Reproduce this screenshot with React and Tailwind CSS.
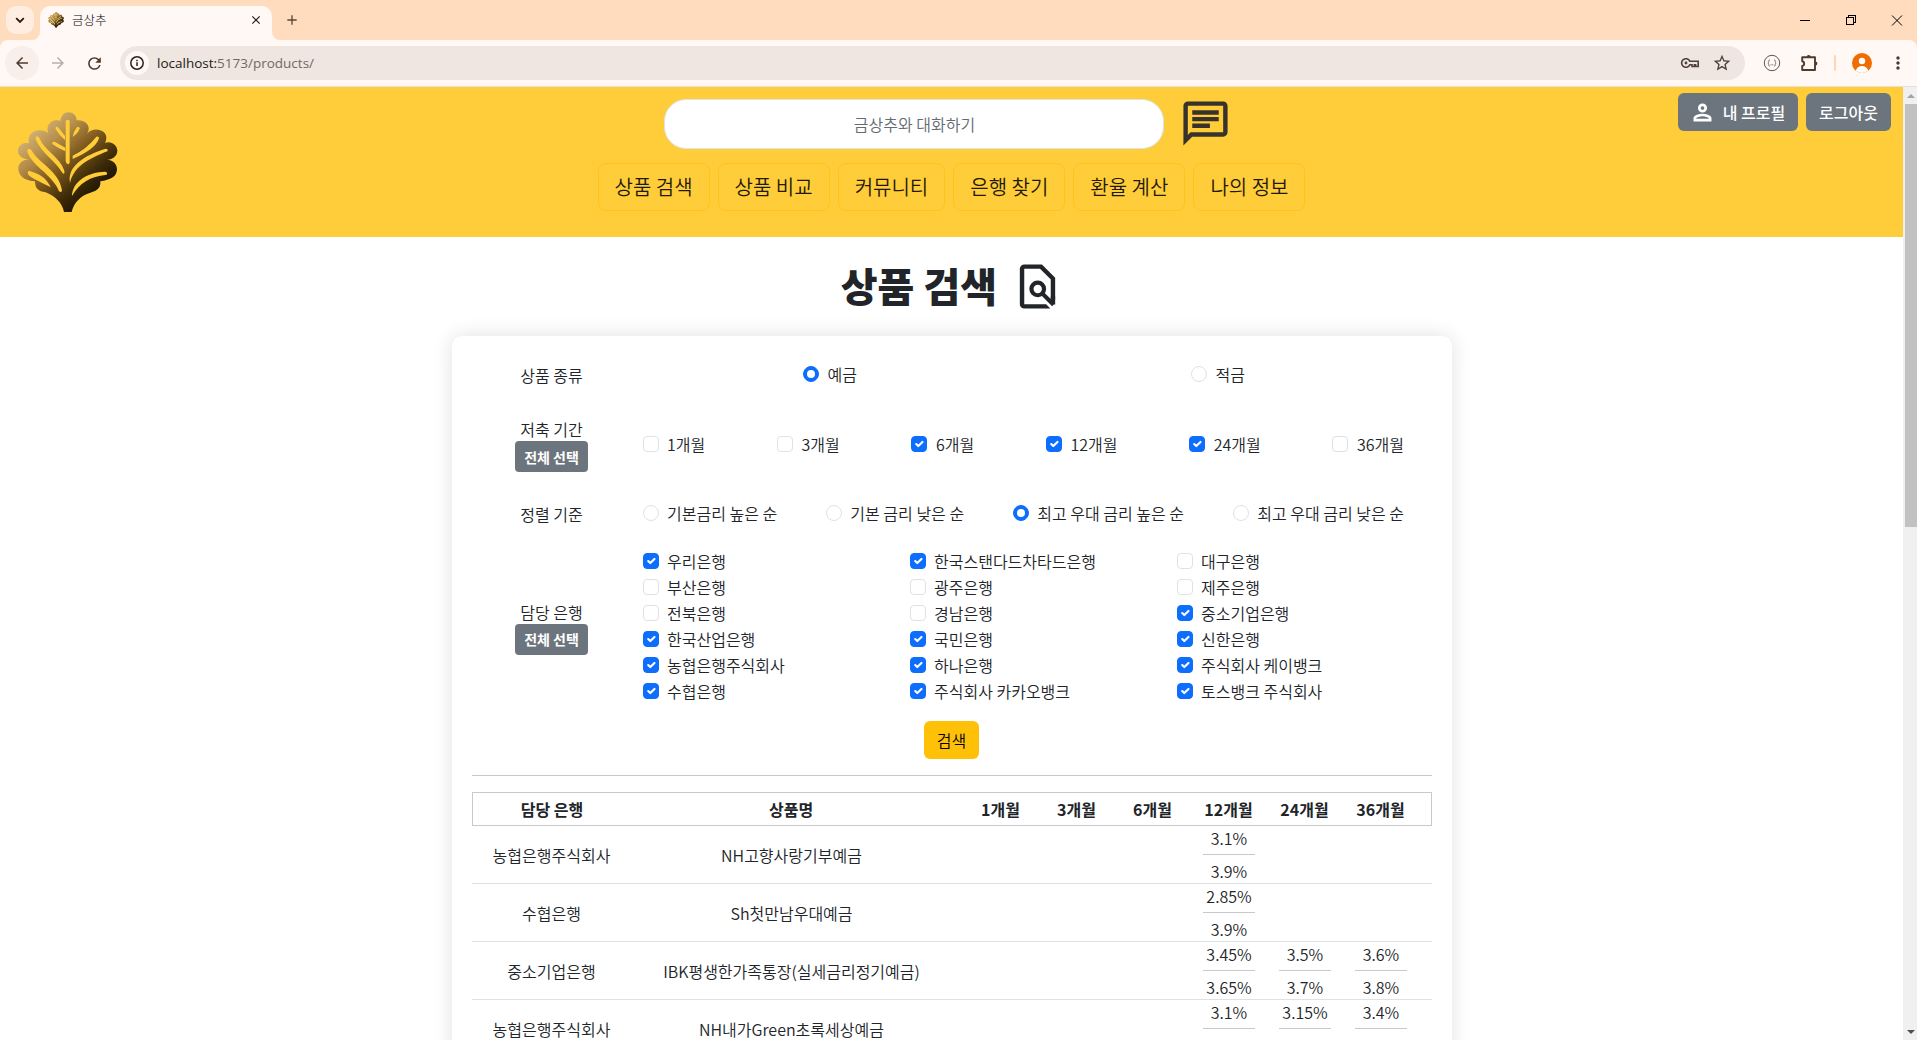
import React from "react";
import {
  MdOutlineChat,
  MdArrowBack,
  MdArrowForward,
  MdRefresh,
  MdStarBorder,
  MdMoreVert,
  MdAdd,
  MdClose,
} from "react-icons/md";

function Leaf({ id, vein, className }) {
  return (
    <svg viewBox="52 50 303 303" className={className} fill="none">
      <defs>
        <linearGradient id={id} gradientUnits="userSpaceOnUse" x1="95" y1="85" x2="285" y2="300">
          <stop offset="0" stopColor="#dcbc80" />
          <stop offset="0.3" stopColor="#b38c48" />
          <stop offset="0.55" stopColor="#7d581c" />
          <stop offset="0.8" stopColor="#3f2c08" />
          <stop offset="1" stopColor="#1c1402" />
        </linearGradient>
      </defs>
      <path
        fill={`url(#${id})`}
        d="M193 350C188 322 165 302 138 291C116 288 106 280 106 258C84 257 58 248 56 222C55 202 72 191 91 193C70 192 53 182 55 164C58 145 74 140 88 144C82 122 98 104 120 105C132 105 140 108 146 114C138 94 150 74 172 75C178 75 180 76 182 77C184 60 194 51 206 51C220 51 230 60 231 75C250 72 268 84 267 100C267 106 264 112 262 115C276 98 300 100 312 110C322 119 322 132 316 142C336 136 352 148 353 166C353 184 336 194 314 194C336 190 352 204 352 222C352 244 332 254 302 258C304 276 294 287 272 292C244 300 222 322 216 350Z"
      />
      <g fill={vein}>
        <path d="M198 77Q204 70 210 77V200Q210 208 204 206Q198 203 198 196Z" />
        <path d="M168 95Q174 93 178 99L196 122V134Q180 122 168 102Z" />
        <path d="M158 141Q163 137 168 141L197 157V168Q174 158 158 146Z" />
        <path d="M232 95Q239 92 240 99Q236 113 219 125Q222 108 232 95Z" />
        <path d="M290 124Q298 121 298 129Q288 162 219 191V181Q262 160 290 124Z" />
        <path d="M318 160Q327 161 323 168C270 190 226 208 211 262C202 214 252 180 318 160Z" />
        <path d="M316 229Q325 230 321 238C270 244 240 262 217 302C218 256 268 230 316 229Z" />
        <path d="M108 125Q114 120 119 128C136 168 180 184 194 226Q196 240 188 232C168 198 124 172 108 132Z" />
        <path d="M83 163Q89 157 95 164C118 206 176 224 187 284Q187 294 178 288C160 240 100 214 83 171Z" />
        <path d="M84 230Q88 225 96 229C122 236 142 250 153 276C132 264 94 250 85 237Z" />
      </g>
    </svg>
  );
}

function FindInPage({ className }) {
  return (
    <svg viewBox="0 0 24 24" className={className} fill="none" stroke="currentColor">
      <path d="M19 18V8.400L13.600 3H6A1 1 0 0 0 5 4V20a1 1 0 0 0 1 1H15.800" strokeWidth="2" />
      <path d="M15.600 20h.300l1.900 2h-2.200zM18 16.500h2v3.900l-2-1.800z" fill="currentColor" stroke="none" />
      <circle cx="12.100" cy="13.100" r="2.850" strokeWidth="1.900" />
      <path d="M14 15l5.300 5.300" strokeWidth="1.900" />
    </svg>
  );
}

function Person({ className }) {
  return (
    <svg viewBox="0 0 24 24" className={className} fill="none" stroke="currentColor" strokeWidth="2.400">
      <circle cx="12" cy="8" r="2.850" />
      <path d="M5.200 18.800V17c0-1.500 3.800-2.800 6.800-2.800s6.800 1.300 6.800 2.800v1.800z" />
    </svg>
  );
}

function BrowserChrome() {
  return (
    <div className="shrink-0 bg-[#ffdcbe] font-['Open_Sans','Noto_Sans_CJK_KR',sans-serif]">
      <div className="flex h-10 items-start">
        <div className="mt-1.5 ml-1.5 flex size-7 items-center justify-center rounded-[10px] bg-[#ffede1]">
          <svg viewBox="0 0 16 16" className="size-4" fill="none" stroke="#231a13" strokeWidth="1.800">
            <path d="M4.200 6.200L8 10l3.800-3.800" />
          </svg>
        </div>
        <div className="relative mt-1.5 ml-1.5 flex h-[34px] w-[232px] items-center rounded-t-[10px] bg-[#fff8f5] pr-[9px] pb-1.5 pl-2">
          <svg viewBox="0 0 10 10" className="absolute bottom-0 -left-2 size-2" fill="#fff8f5">
            <path d="M10 0v10H0A10 10 0 0 0 10 0Z" />
          </svg>
          <svg viewBox="0 0 10 10" className="absolute -right-2 bottom-0 size-2" fill="#fff8f5">
            <path d="M0 0v10h10A10 10 0 0 1 0 0Z" />
          </svg>
          <Leaf id="leaf-small" vein="#ecd489" className="size-4" />
          <span className="mt-0.5 ml-2 text-[12.5px] leading-4 font-light text-black">금상추</span>
          <MdClose className="ml-auto size-[14px] text-[#231a13]" />
        </div>
        <div className="mt-3 ml-3 flex size-4 items-center justify-center">
          <MdAdd className="size-4 shrink-0 text-[#5e4630]" />
        </div>
        <div className="-mr-[3px] ml-auto flex h-10 items-center">
          <svg viewBox="0 0 46 40" className="h-10 w-[46px]" shapeRendering="crispEdges">
            <path d="M18 20.500h10" stroke="#000" />
          </svg>
          <svg viewBox="0 0 46 40" className="h-10 w-[46px]" fill="none" stroke="#000" shapeRendering="crispEdges">
            <path d="M18.500 17.500h7v7h-7zM20.500 17.500v-2h7v7h-2" />
          </svg>
          <svg viewBox="0 0 46 40" className="h-10 w-[46px]" fill="none" stroke="#000">
            <path d="M18 15.500l10 10M28 15.500l-10 10" />
          </svg>
        </div>
      </div>
      <div className="flex h-[47px] items-center rounded-t-lg border-b border-[#eadfd8] bg-[#fff8f5]">
        <div className="ml-[5px] flex size-[34px] items-center justify-center rounded-full bg-[#f8eeea]">
          <MdArrowBack className="size-[18px] text-[#4f3b2c]" />
        </div>
        <div className="ml-0.5 flex size-[34px] items-center justify-center">
          <MdArrowForward className="size-[18px] text-[#b8aea8]" />
        </div>
        <div className="ml-0.5 flex size-[34px] items-center justify-center">
          <MdRefresh className="size-[19px] text-[#4f3b2c]" />
        </div>
        <div className="ml-[9px] flex h-[34px] w-[1625px] items-center rounded-full bg-[#efe6e2] pl-[5px]">
          <div className="flex size-6 items-center justify-center rounded-full bg-[#fff8f5]">
            <svg viewBox="0 0 16 16" className="size-4" fill="none" stroke="#2a211b" strokeWidth="1.500">
              <circle cx="8" cy="8" r="6.200" />
              <path d="M8 7.300v3.700M8 4.700v1.500" />
            </svg>
          </div>
          <span className="ml-2 text-[13.5px] leading-5 text-[#75675f]">
            <span className="text-[#231a13]">localhost:</span>5173/products/
          </span>
          <svg viewBox="0 0 20 12" className="ml-auto h-3 w-5" fill="none" stroke="#4f4038" strokeWidth="1.600">
            <path d="M9.800 4.200H18.200V9.500H15.600V7.800H14.400V9.500H12V7.800H9.800A4.300 4.300 0 1 1 9.800 4.200Z" />
            <circle cx="6" cy="6" r="1.400" fill="#4f4038" stroke="none" />
          </svg>
          <MdStarBorder className="mr-[13px] ml-[12px] size-5 text-[#4f4038]" />
        </div>
        <svg viewBox="0 0 18 18" className="ml-[18px] size-[18px]" fill="none" stroke="#5e5650">
          <circle cx="9" cy="9" r="7.700" />
          <path d="M7 5.800c-1.600 0-1.100 1.300-1.300 2.300L4.800 9l.9.900c.2 1-.3 2.300 1.300 2.300M11 5.800c1.600 0 1.100 1.300 1.300 2.300l.9.900-.9.900c-.2 1 .3 2.300-1.300 2.300" strokeWidth=".8" />
          <path d="M7.500 10.800h3" strokeWidth=".8" strokeDasharray="1 .4" />
        </svg>
        <svg viewBox="0 0 20 20" className="ml-[18px] size-5" fill="none" stroke="#4f3b2c" strokeWidth="1.900" strokeLinejoin="round">
          <path d="M3.200 4.300H16v12.700H3.200V13a2.400 2.400 0 0 0 0-4.700z" />
          <path d="M7.700 3.900a2 2 0 0 1 4 0zM16.400 8.500a2 2 0 0 1 0 4z" fill="#4f3b2c" stroke="none" />
        </svg>
        <div className="ml-[15px] h-4 w-0.5 rounded-full bg-[#ffd5b3]" />
        <svg viewBox="0 0 20 20" className="ml-4 size-5">
          <circle cx="10" cy="10" r="10" fill="#ef6c00" />
          <circle cx="10" cy="8" r="3.200" fill="#fff" />
          <path d="M3.800 17.800C4.500 14.500 7 13 10 13s5.500 1.500 6.200 4.800A10 10 0 0 1 3.800 17.800Z" fill="#fff" />
        </svg>
        <MdMoreVert className="ml-4 size-5 text-[#4f3b2c]" />
      </div>
    </div>
  );
}

function Option({ label, checked, radio }) {
  const shape = radio ? "rounded-full" : "rounded-[4px]";
  const fill = checked ? "border-[#0d6efd] bg-[#0d6efd]" : "border-[#dee2e6] bg-white";
  return (
    <label className="flex h-6 items-start gap-[8.5px]">
      <span className={`mt-1 flex size-4 items-center justify-center border ${shape} ${fill}`}>
        {checked && radio && <span className="size-2 rounded-full bg-white" />}
        {checked && !radio && (
          <svg viewBox="0 0 20 20" className="size-3.5 shrink-0" fill="none" stroke="#fff" strokeWidth="3" strokeLinecap="round" strokeLinejoin="round">
            <path d="m6 10 3 3 6-6" />
          </svg>
        )}
      </span>
      <span className="leading-6">{label}</span>
    </label>
  );
}

function Label({ children, all }) {
  return (
    <div className="flex w-40 shrink-0 flex-col items-center justify-center">
      <span className="leading-6">{children}</span>
      {all && (
        <button className="h-[31px] rounded-[4px] bg-[#6c757d] px-[9px] text-sm leading-5 font-bold text-white">전체 선택</button>
      )}
    </div>
  );
}

const NAV = ["상품 검색", "상품 비교", "커뮤니티", "은행 찾기", "환율 계산", "나의 정보"];

const PERIODS = [
  ["1개월", false],
  ["3개월", false],
  ["6개월", true],
  ["12개월", true],
  ["24개월", true],
  ["36개월", false],
];

const SORTS = [
  ["기본금리 높은 순", false],
  ["기본 금리 낮은 순", false],
  ["최고 우대 금리 높은 순", true],
  ["최고 우대 금리 낮은 순", false],
];

const BANKS = [
  ["우리은행", true],
  ["한국스탠다드차타드은행", true],
  ["대구은행", false],
  ["부산은행", false],
  ["광주은행", false],
  ["제주은행", false],
  ["전북은행", false],
  ["경남은행", false],
  ["중소기업은행", true],
  ["한국산업은행", true],
  ["국민은행", true],
  ["신한은행", true],
  ["농협은행주식회사", true],
  ["하나은행", true],
  ["주식회사 케이뱅크", true],
  ["수협은행", true],
  ["주식회사 카카오뱅크", true],
  ["토스뱅크 주식회사", true],
];

const ROWS = [
  { bank: "농협은행주식회사", name: "NH고향사랑기부예금", rates: [null, null, null, ["3.1%", "3.9%"], null, null] },
  { bank: "수협은행", name: "Sh첫만남우대예금", rates: [null, null, null, ["2.85%", "3.9%"], null, null] },
  {
    bank: "중소기업은행",
    name: "IBK평생한가족통장(실세금리정기예금)",
    rates: [null, null, null, ["3.45%", "3.65%"], ["3.5%", "3.7%"], ["3.6%", "3.8%"]],
  },
  {
    bank: "농협은행주식회사",
    name: "NH내가Green초록세상예금",
    rates: [null, null, null, ["3.1%"], ["3.15%"], ["3.4%"]],
  },
];

function Header() {
  return (
    <header className="grid h-[150px] grid-cols-[1fr_auto_1fr] bg-[#ffcd39]">
      <div className="pt-[25px] pl-[17px]">
        <Leaf id="leaf-large" vein="#ffcd39" className="size-[101px]" />
      </div>
      <div className="flex flex-col items-center pt-3">
        <div className="flex h-[52px] pl-0.5">
          <div className="flex h-[50px] w-[500px] items-center justify-center rounded-[22px] border border-[#dee2e6] bg-white text-[#646b71]">
            금상추와 대화하기
          </div>
          <MdOutlineChat className="-mt-0.5 mr-2 ml-[15px] size-[53px] text-[#38332a]" />
        </div>
        <nav className="mt-3 flex gap-2">
          {NAV.map((item) => (
            <button key={item} className="h-12 rounded-lg border border-[#ffc31a] px-4 text-xl leading-[30px] text-[#1f1a08]">
              {item}
            </button>
          ))}
        </nav>
      </div>
      <div className="flex items-start justify-end gap-2 pt-1.5 pr-3 font-medium text-white">
        <button className="flex h-[38px] items-center rounded-md bg-[#6c757d] pr-[13px] pl-[11px]">
          <Person className="mr-[7px] size-[27px]" />내 프로필
        </button>
        <button className="h-[38px] rounded-md bg-[#6c757d] px-[13px]">로그아웃</button>
      </div>
    </header>
  );
}

function SearchForm() {
  return (
    <div className="flex flex-col">
      <div className="-mt-[5px] flex h-12">
        <Label>상품 종류</Label>
        <div className="flex flex-1 items-center justify-around px-3">
          <div className="-mt-0.5 mr-[15px]"><Option radio checked label="예금" /></div>
          <div className="-mt-0.5 mr-[15px]"><Option radio label="적금" /></div>
        </div>
      </div>
      <div className="mt-[18px] flex h-[55px]">
        <Label all>저축 기간</Label>
        <div className="-mt-px flex flex-1 items-center justify-between pr-[27.5px] pl-[11px]">
          {PERIODS.map(([label, checked]) => (
            <Option key={label} label={label} checked={checked} />
          ))}
        </div>
      </div>
      <div className="mt-[17px] flex h-12">
        <div className="flex pt-0.5"><Label>정렬 기준</Label></div>
        <div className="flex flex-1 items-center justify-between pr-[27.5px] pl-[11px]">
          {SORTS.map(([label, checked]) => (
            <Option key={label} radio label={label} checked={checked} />
          ))}
        </div>
      </div>
      <div className="mt-3 flex h-[156px]">
        <Label all>담당 은행</Label>
        <div className="grid flex-1 auto-rows-[26px] grid-cols-[267px_267px_1fr] pl-[11px]">
          {BANKS.map(([label, checked]) => (
            <Option key={label} label={label} checked={checked} />
          ))}
        </div>
      </div>
      <button className="mt-4 h-[38px] self-center rounded-md bg-[#ffc107] px-[13px] leading-6 text-black">검색</button>
    </div>
  );
}

function Results() {
  return (
    <div className="mt-4 text-center">
      <div className="flex h-[34px] items-center border border-[#c8c9ca] font-bold">
        <div className="w-[159px]">담당 은행</div>
        <div className="w-80">상품명</div>
        <div className="flex flex-1 pr-3 pl-[11.5px]">
          {PERIODS.map(([label]) => (
            <div key={label} className="w-[76px] shrink-0">{label}</div>
          ))}
        </div>
      </div>
      {ROWS.map((row, index) => (
        <div key={index} className="flex h-[58px] items-center border-b border-[#dee2e6]">
          <div className="w-40">{row.bank}</div>
          <div className="w-80">{row.name}</div>
          <div className="flex flex-1 self-start pr-[13px] pl-[11px]">
            {row.rates.map((rate, i) => (
              <div key={i} className="w-[76px] px-3">
                {rate && (
                  <>
                    <div className="pl-px leading-6">{rate[0]}</div>
                    <hr className="my-1 border-[#c8c9ca]" />
                    <div className="pl-px leading-6">{rate[1]}</div>
                  </>
                )}
              </div>
            ))}
          </div>
        </div>
      ))}
    </div>
  );
}

function Scrollbar() {
  return (
    <div className="flex w-[14px] shrink-0 flex-col bg-[#f0f0f0] pl-0.5">
      <div className="flex h-[17px] items-center justify-center">
        <span className="border-x-4 border-b-4 border-x-transparent border-b-[#a3a3a3]" />
      </div>
      <div className="h-[423px] bg-[#c1c1c1]" />
      <div className="mt-auto flex h-[17px] items-center justify-center">
        <span className="border-x-4 border-t-4 border-x-transparent border-t-[#505050]" />
      </div>
    </div>
  );
}

export default function App() {
  return (
    <div className="flex h-screen w-full flex-col overflow-hidden bg-white">
      <BrowserChrome />
      <div className="flex min-h-0 flex-1">
        <div className="min-w-0 flex-1 overflow-hidden font-['Noto_Sans_CJK_KR',sans-serif] text-base font-[350] text-[#212529]">
          <Header />
          <main className="flex flex-col items-center">
            <div className="mt-[22px] flex h-[54px] items-center gap-[14px] pl-0.5">
              <h1 className="-mt-0.5 text-[40px] leading-[48px] font-extrabold">상품 검색</h1>
              <FindInPage className="size-[53px]" />
            </div>
            <section className="mt-[23px] w-[1000px] rounded-[10px] bg-white p-5 shadow-[0_0_20px_rgba(0,0,0,0.12)]">
              <SearchForm />
              <hr className="mt-4 border-[#c8c9ca]" />
              <Results />
            </section>
          </main>
        </div>
        <Scrollbar />
      </div>
    </div>
  );
}
